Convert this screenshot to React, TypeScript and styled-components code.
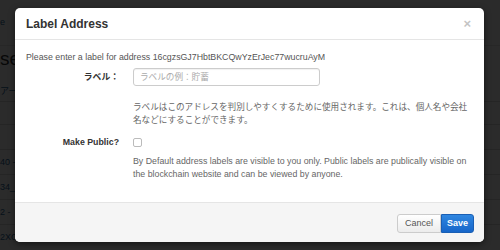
import React from 'react';
import styled, { createGlobalStyle } from 'styled-components';

const GlobalStyle = createGlobalStyle`
  html, body {
    margin: 0;
    padding: 0;
    width: 500px;
    height: 250px;
    overflow: hidden;
    background: #ffffff;
    font-family: "Liberation Sans", Arial, "Noto Sans CJK JP", sans-serif;
  }
`;

const Page = styled.div`
  width: 500px;
  height: 250px;
  overflow: hidden;
  position: relative;
  background: #ffffff;
`;

const NavLink = styled.div`
  height: 46px;
  padding-top: 17px;
  box-sizing: border-box;
  font-size: 9px;
  color: #2a6496;
  border-bottom: 1px solid #e5e5e5;
`;

const Heading = styled.div`
  font-size: 19px;
  color: #333333;
  height: 26px;
  line-height: 26px;
`;

const Tabs = styled.div`
  margin-top: 9px;
  height: 20px;
  font-size: 9px;
  line-height: 20px;
  color: #2a6496;
  border-bottom: 1px solid #dddddd;
`;

const Table = styled.div`
  margin-top: 22px;
  display: flex;
  flex-direction: column;
`;

const Row = styled.div`
  height: 25px;
  line-height: 25px;
  font-size: 9px;
  color: #2a6496;
  border-top: 1px solid #dddddd;
  box-sizing: border-box;
`;

const Backdrop = styled.div`
  position: absolute;
  inset: 0;
  background: rgba(0, 0, 0, 0.83);
`;

const Modal = styled.div`
  position: absolute;
  left: 15px;
  top: 8px;
  width: 469px;
  height: 234px;
  background: #ffffff;
  border-radius: 5px;
  box-shadow: 0 2px 6px rgba(0, 0, 0, 0.5);
  display: flex;
  flex-direction: column;
  overflow: hidden;
`;

const Header = styled.div`
  height: 32px;
  box-sizing: border-box;
  padding: 0 11px;
  display: flex;
  align-items: center;
  justify-content: space-between;
  border-bottom: 1px solid #e5e5e5;
`;

const Title = styled.h4`
  margin: 0;
  font-size: 12px;
  font-weight: bold;
  color: #333333;
`;

const Close = styled.span`
  font-size: 13px;
  font-weight: bold;
  color: #c4c4c4;
  margin-right: 2px;
`;

const Body = styled.div`
  flex: 1;
  padding: 11px 11px 0;
  font-size: 8.8px;
  line-height: 13px;
  color: #555555;
`;

const Intro = styled.p`
  margin: 0 0 4px;
`;

const FormRow = styled.div<{ $top?: number }>`
  display: grid;
  grid-template-columns: 107px 1fr;
  margin-top: ${(p) => p.$top ?? 0}px;
`;

const FieldLabel = styled.label<{ $height: number }>`
  font-weight: bold;
  color: #333333;
  text-align: right;
  padding-right: 14px;
  height: ${(p) => p.$height}px;
  line-height: ${(p) => p.$height}px;
`;

const Field = styled.div``;

const Input = styled.input`
  display: block;
  box-sizing: border-box;
  width: 187px;
  height: 18px;
  padding: 0 6px;
  border: 1px solid #cccccc;
  border-radius: 3px;
  box-shadow: inset 0 1px 1px rgba(0, 0, 0, 0.06);
  font-family: inherit;
  font-size: 8.6px;
  color: #555555;
  &::placeholder {
    color: #aaaaaa;
  }
`;

const Help = styled.p<{ $top: number; $cjk?: boolean }>`
  margin: ${(p) => p.$top}px 0 0;
  color: #666666;
  font-size: ${(p) => (p.$cjk ? '8.6px' : 'inherit')};
`;

const Check = styled.span`
  display: block;
  margin-top: 2px;
  width: 7px;
  height: 7px;
  border: 1px solid #bbbbbb;
  border-radius: 2px;
  background: #ffffff;
`;

const Footer = styled.div`
  height: 40px;
  box-sizing: border-box;
  padding: 0 10px 0 0;
  border-top: 1px solid #e5e5e5;
  background: #f5f5f5;
  display: flex;
  align-items: center;
  justify-content: flex-end;
`;

const Button = styled.button<{ $primary?: boolean }>`
  height: 19px;
  padding: 0 ${(p) => (p.$primary ? 5 : 7)}px;
  font-family: inherit;
  font-size: 9px;
  font-weight: ${(p) => (p.$primary ? 'bold' : 'normal')};
  color: ${(p) => (p.$primary ? '#ffffff' : '#555555')};
  border: 1px solid ${(p) => (p.$primary ? '#1a5fb4' : '#cccccc')};
  background: ${(p) =>
    p.$primary
      ? 'linear-gradient(#2f86e0, #1766c9)'
      : 'linear-gradient(#ffffff, #ececec)'};
  border-radius: ${(p) => (p.$primary ? '0 3px 3px 0' : '3px 0 0 3px')};
  margin: 0;
  margin-top: 1px;
`;

const App: React.FC = () => {
  const rows: string[] = ['', '40 -', '34_', '2 -', '2XC'];

  return (
    <Page>
      <GlobalStyle />
      <NavLink>e</NavLink>
      <Heading>se</Heading>
      <Tabs>アー</Tabs>
      <Table>
        {rows.map((r, i) => (
          <Row key={i}>{r}</Row>
        ))}
      </Table>
      <Backdrop />
      <Modal>
        <Header>
          <Title>Label Address</Title>
          <Close>×</Close>
        </Header>
        <Body>
          <Intro>Please enter a label for address 16cgzsGJ7HbtBKCQwYzErJec77wucruAyM</Intro>
          <FormRow>
            <FieldLabel $height={18}>ラベル：</FieldLabel>
            <Field>
              <Input placeholder="ラベルの例：貯蓄" />
              <Help $top={15} $cjk>
                ラベルはこのアドレスを判別しやすくするために使用されます。これは、個人名や会社名などにすることができます。
              </Help>
            </Field>
          </FormRow>
          <FormRow $top={9}>
            <FieldLabel $height={13}>Make Public?</FieldLabel>
            <Field>
              <Check />
              <Help $top={8}>
                By Default address labels are visible to you only. Public labels are publically visible on the blockchain website and can be viewed by anyone.
              </Help>
            </Field>
          </FormRow>
        </Body>
        <Footer>
          <Button>Cancel</Button>
          <Button $primary>Save</Button>
        </Footer>
      </Modal>
    </Page>
  );
};

export default App;
